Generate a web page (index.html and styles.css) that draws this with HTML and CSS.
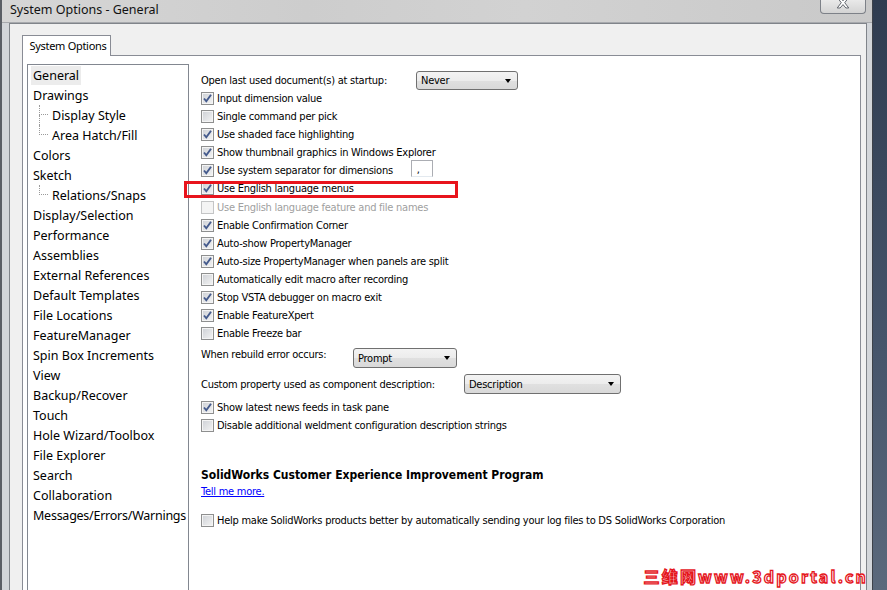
FILE: index.html
```html
<!DOCTYPE html>
<html lang="en">
<head>
    <meta charset="UTF-8">
    <title>System Options - General</title>
    <link rel="stylesheet" href="styles.css">
</head>
<body>
    <div class="window">
        <!-- Title bar -->
        <div class="titlebar">
            <span class="title">System Options - General</span>
            <div class="close">
                <svg width="46" height="14" viewBox="0 0 46 14">
                    <path d="M17 -3 L20 -3 L23 0.5 L26 -3 L29 -3 L24.8 2.5 L29 8 L26 8 L23 4.5 L20 8 L17 8 L21.2 2.5 Z" fill="#fff" stroke="#5a5e66" stroke-width="1"/>
                </svg>
            </div>
        </div>

        <div class="client">
            <div class="tabs">
                <div class="tab">System Options</div>
            </div>

            <div class="panel">
                <!-- Category tree -->
                <ul class="tree">
                    <li class="node"><span class="label selected">General</span></li>
                    <li class="node"><span class="label">Drawings</span></li>
                    <li class="node child"><span class="branch mid"><i></i><b></b></span><span class="label">Display Style</span></li>
                    <li class="node child"><span class="branch"><i></i><b></b></span><span class="label">Area Hatch/Fill</span></li>
                    <li class="node"><span class="label">Colors</span></li>
                    <li class="node"><span class="label">Sketch</span></li>
                    <li class="node child"><span class="branch"><i></i><b></b></span><span class="label">Relations/Snaps</span></li>
                    <li class="node"><span class="label">Display/Selection</span></li>
                    <li class="node"><span class="label">Performance</span></li>
                    <li class="node"><span class="label">Assemblies</span></li>
                    <li class="node"><span class="label">External References</span></li>
                    <li class="node"><span class="label">Default Templates</span></li>
                    <li class="node"><span class="label">File Locations</span></li>
                    <li class="node"><span class="label">FeatureManager</span></li>
                    <li class="node"><span class="label">Spin Box Increments</span></li>
                    <li class="node"><span class="label">View</span></li>
                    <li class="node"><span class="label">Backup/Recover</span></li>
                    <li class="node"><span class="label">Touch</span></li>
                    <li class="node"><span class="label">Hole Wizard/Toolbox</span></li>
                    <li class="node"><span class="label">File Explorer</span></li>
                    <li class="node"><span class="label">Search</span></li>
                    <li class="node"><span class="label">Collaboration</span></li>
                    <li class="node"><span class="label long">Messages/Errors/Warnings</span></li>
                </ul>

                <!-- General options -->
                <div class="options">
                    <div class="row first">
                        <span class="field-label w-startup">Open last used document(s) at startup:</span>
                        <div class="combo w-never"><span>Never</span><i class="arrow"></i></div>
                    </div>

                    <div class="row"><span class="check on"></span>Input dimension value</div>
                    <div class="row"><span class="check"></span>Single command per pick</div>
                    <div class="row"><span class="check on"></span>Use shaded face highlighting</div>
                    <div class="row"><span class="check on"></span>Show thumbnail graphics in Windows Explorer</div>
                    <div class="row"><span class="check on"></span>Use system separator for dimensions<span class="sep-box">,</span></div>
                    <div class="row r19 marked">
                        <span class="check on"></span>Use English language menus
                        <span class="highlight"></span>
                    </div>
                    <div class="row r19 disabled"><span class="check"></span>Use English language feature and file names</div>
                    <div class="row r17"><span class="check on"></span>Enable Confirmation Corner</div>
                    <div class="row"><span class="check on"></span>Auto-show PropertyManager</div>
                    <div class="row"><span class="check on"></span>Auto-size PropertyManager when panels are split</div>
                    <div class="row"><span class="check"></span>Automatically edit macro after recording</div>
                    <div class="row"><span class="check on"></span>Stop VSTA debugger on macro exit</div>
                    <div class="row"><span class="check on"></span>Enable FeatureXpert</div>
                    <div class="row"><span class="check"></span>Enable Freeze bar</div>

                    <div class="row combo-row top-label">
                        <span class="field-label w-rebuild">When rebuild error occurs:</span>
                        <div class="combo w-prompt"><span>Prompt</span><i class="arrow"></i></div>
                    </div>
                    <div class="row combo-row">
                        <span class="field-label w-custom">Custom property used as component description:</span>
                        <div class="combo w-desc"><span>Description</span><i class="arrow"></i></div>
                    </div>

                    <div class="row gap-news"><span class="check on"></span>Show latest news feeds in task pane</div>
                    <div class="row"><span class="check"></span>Disable additional weldment configuration description strings</div>

                    <h2 class="section-title">SolidWorks Customer Experience Improvement Program</h2>
                    <a class="more-link" href="#">Tell me more.</a>

                    <div class="row gap-help"><span class="check"></span>Help make SolidWorks products better by automatically sending your log files to DS SolidWorks Corporation</div>
                </div>
            </div>
        </div>
    </div>

    <div class="watermark">三维网www.3dportal.cn</div>
</body>
</html>
```

FILE: styles.css
```css
/* General Reset */
* {
    margin: 0;
    padding: 0;
    box-sizing: border-box;
}

body {
    width: 887px;
    height: 590px;
    overflow: hidden;
    position: relative;
    background: linear-gradient(180deg, #2f3c50, #46556b 60%, #5b697c);
    font-family: "DejaVu Sans Condensed", "DejaVu Sans", sans-serif;
    font-stretch: condensed;
    font-size: 11px;
    letter-spacing: -0.25px;
    color: #000;
}

/* Window frame */
.window {
    width: 873px;
    height: 590px;
    display: flex;
    flex-direction: column;
    background: #d3d6da;
    border-left: 2px solid #5b5f66;
    border-right: 1px solid #3d424a;
}

.titlebar {
    height: 23px;
    display: flex;
    justify-content: space-between;
    align-items: flex-start;
    background: linear-gradient(90deg, #d6d6d6, #cdcdcd 35%, #d2d2d2 60%, #c9c9c9);
    border-bottom: 1px solid #a7a9ad;
}

.title {
    padding: 1px 0 0 8px;
    font-family: "Noto Sans", sans-serif;
    font-stretch: normal;
    font-size: 12.5px;
    letter-spacing: 0;
    line-height: 17px;
    color: #111;
}

.close {
    width: 46px;
    height: 14px;
    margin-right: 6px;
    border: 1px solid #7d8188;
    border-top: none;
    border-radius: 0 0 4px 4px;
    background: linear-gradient(#e9e9e9, #d3d3d3);
    display: flex;
}

.client {
    flex: 1;
    margin: 0 5px 0 7px;
    border: 1px solid #80848a;
    border-bottom: none;
    background: #f0f0f0;
    display: flex;
    flex-direction: column;
    min-height: 0;
}

/* Tab strip */
.tabs {
    display: flex;
    padding: 11px 0 0 12px;
}

.tab {
    position: relative;
    z-index: 1;
    height: 21px;
    width: 89px;
    margin-bottom: -1px;
    border: 1px solid #898c95;
    border-bottom: none;
    background: #fff;
    font-family: "Noto Sans", sans-serif;
    font-stretch: normal;
    font-size: 11px;
    letter-spacing: -0.3px;
    line-height: 19px;
    text-align: center;
    padding-left: 3px;
}

.panel {
    flex: 1;
    margin: 0 5px 0 12px;
    border: 1px solid #898c95;
    border-bottom: none;
    background: #fff;
    display: flex;
    gap: 12px;
    padding: 8px 0 0 4px;
    min-height: 0;
}

/* Category tree */
.tree {
    width: 162px;
    flex-shrink: 0;
    list-style: none;
    border: 1px solid #828790;
    border-bottom: none;
    overflow: hidden;
    font-family: "Noto Sans", sans-serif;
    font-stretch: normal;
    font-size: 12.5px;
    letter-spacing: 0;
    color: #000;
}

.node {
    height: 20px;
    display: flex;
    align-items: center;
    white-space: nowrap;
    padding-left: 3px;
}

.node .label {
    padding: 0 2px;
    line-height: 19px;
}

.node .long {
    letter-spacing: -0.25px;
}

.node .selected {
    background: #ececec;
}

.node.child {
    padding-left: 11px;
    align-items: stretch;
}

.node.child .label {
    align-self: center;
}

.branch {
    width: 11px;
    display: flex;
    flex-direction: column;
}

.branch i {
    height: 10px;
    margin-right: 2px;
    border-left: 1px dotted #9a9a9a;
    border-bottom: 1px dotted #9a9a9a;
}

.branch b {
    flex: 1;
}

.branch.mid b {
    border-left: 1px dotted #9a9a9a;
}

/* Options */
.options {
    display: flex;
    flex-direction: column;
}

.row {
    position: relative;
    height: 18px;
    display: flex;
    align-items: center;
    white-space: nowrap;
}

.row.first {
    margin-top: 7px;
}

.row.r19 {
    height: 19px;
}

.row.r17 {
    height: 17px;
}

.row.disabled {
    color: #a0a0a0;
}

.field-label {
    flex-shrink: 0;
}

.w-startup { width: 215px; }
.w-rebuild { width: 152px; }
.w-custom { width: 263px; }

.row.first .combo {
    align-self: flex-start;
}

.combo-row {
    height: 20px;
    margin-top: 6px;
}

.top-label {
    align-items: flex-start;
}

.top-label .field-label {
    line-height: 14px;
}

.combo {
    height: 19px;
    display: flex;
    justify-content: space-between;
    align-items: center;
    padding: 0 6px 0 4px;
    border: 1px solid #707070;
    border-radius: 3px;
    background: linear-gradient(#f3f3f3, #ececec 50%, #e0e0e0 50%, #d9d9d9);
}

.combo-row .combo {
    height: 20px;
}

.w-never { width: 102px; }
.w-prompt { width: 104px; }
.w-desc { width: 157px; }

.arrow {
    width: 0;
    height: 0;
    border-left: 3.5px solid transparent;
    border-right: 3.5px solid transparent;
    border-top: 4px solid #000;
}

/* Checkboxes */
.check {
    width: 13px;
    height: 13px;
    flex-shrink: 0;
    margin-right: 3px;
    border: 1px solid #8e8f8f;
    background: linear-gradient(135deg, #cdd0d5, #f4f4f4);
    box-shadow: inset 0 0 0 1px #f4f4f4;
}

.check.on {
    background-color: #e6e8eb;
    background-image: url("data:image/svg+xml,%3Csvg xmlns='http://www.w3.org/2000/svg' width='11' height='11'%3E%3Cpath d='M2 5.5 L4.3 8.3 L9 1.8' fill='none' stroke='%23445a8c' stroke-width='1.9'/%3E%3C/svg%3E"), linear-gradient(135deg, #cdd0d5, #f4f4f4);
    background-repeat: no-repeat;
    background-position: center;
}

.disabled .check {
    border-color: #c4c5c6;
    background: #f4f4f4;
}

.sep-box {
    width: 22px;
    height: 17px;
    margin-left: 18px;
    margin-top: -3px;
    border: 1px solid #abadb3;
    border-bottom-color: #e3e9ef;
    background: #fff;
    padding: 4px 0 0 5px;
    line-height: 10px;
}

/* Red annotation frame */
.highlight {
    position: absolute;
    left: -17px;
    top: 2px;
    width: 274px;
    height: 17px;
    border: 3px solid #e8141c;
}

.gap-news {
    margin-top: 4px;
}

.section-title {
    margin-top: 33px;
    font-size: 12px;
    font-weight: bold;
    letter-spacing: 0;
    line-height: 16px;
}

.more-link {
    color: #0000ff;
    line-height: 18px;
    align-self: flex-start;
}

.gap-help {
    margin-top: 10px;
}

/* Watermark */
.watermark {
    position: absolute;
    right: 19px;
    bottom: 5px;
    font-family: "Noto Sans CJK SC", sans-serif;
    font-stretch: normal;
    font-size: 16px;
    font-weight: bold;
    line-height: 17px;
    letter-spacing: 2.2px;
    color: #fff;
    -webkit-text-stroke: 1.3px #e5161d;
}
```
